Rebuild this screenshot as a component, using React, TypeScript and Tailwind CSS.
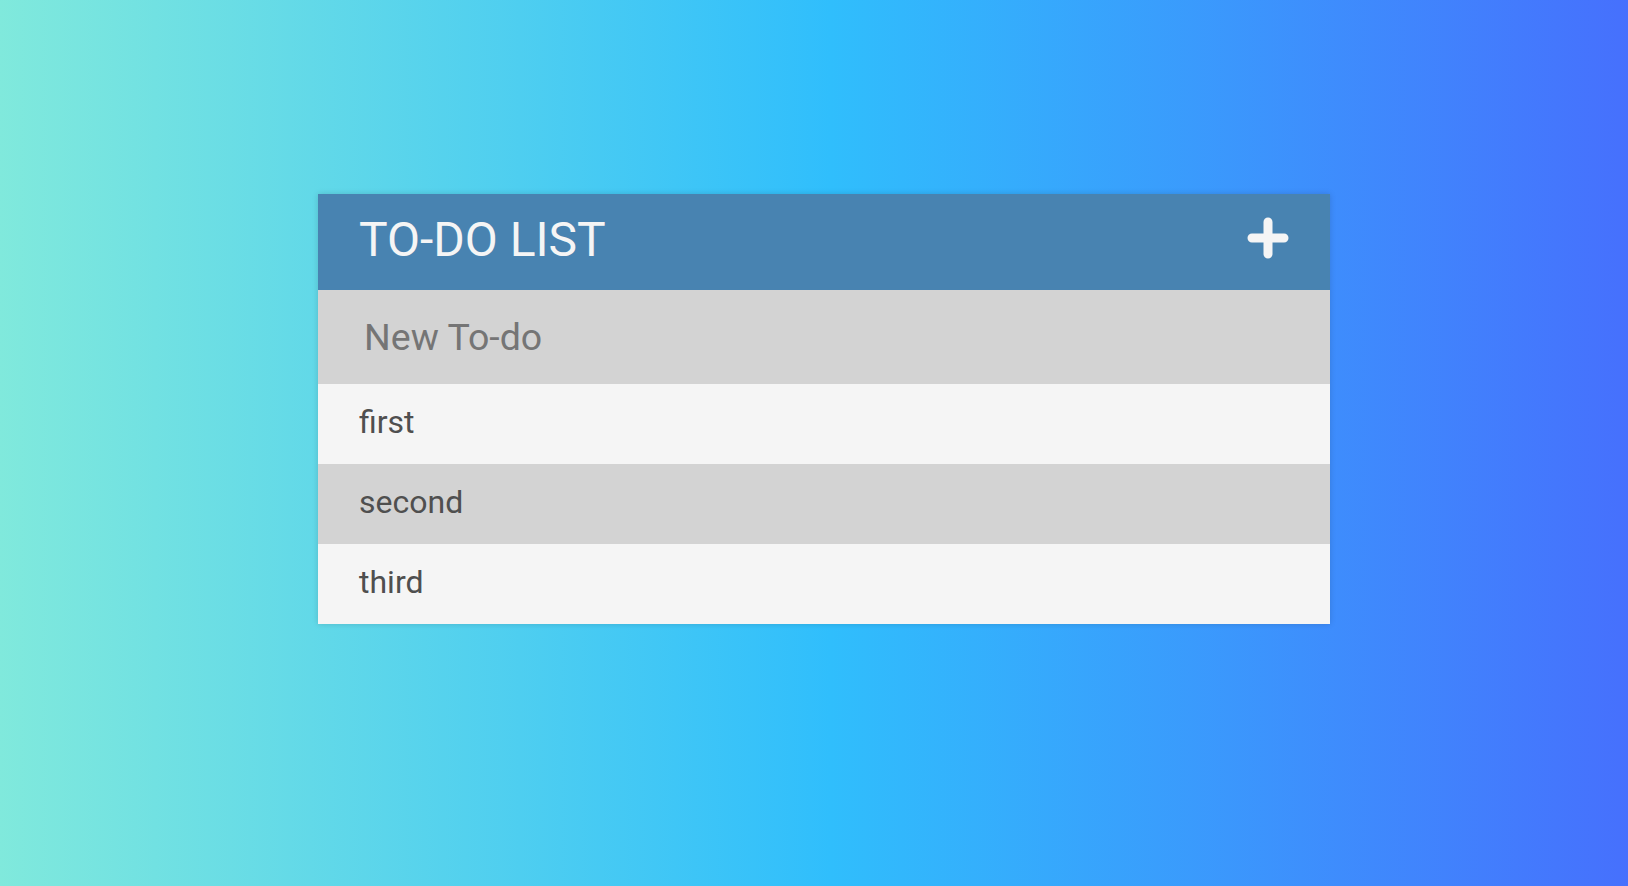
const todos = ['first', 'second', 'third'];

function PlusIcon() {
  return (
    <svg width="42" height="42" viewBox="0 0 42 42" aria-hidden="true">
      <path d="M21 5v32M5 21h32" stroke="#f5f5f5" strokeWidth="9" strokeLinecap="round" />
    </svg>
  );
}

export default function App() {
  return (
    <div className="h-screen w-full overflow-hidden bg-[linear-gradient(to_right,#80e9dc_0%,#30befc_51%,#4670fd_100%)] pt-[194px] pl-[318px] font-['Roboto',sans-serif]">
      <div className="w-[1012px] shadow-[0_0_6px_rgba(0,0,0,0.15)]">
        <div className="flex h-[96px] items-center justify-between bg-[#4883b1] px-[41px]">
          <h1 className="-mt-[4px] text-[48px] font-normal leading-none text-[#f5f5f5]">TO-DO LIST</h1>
          <div className="-mt-[8px]">
            <PlusIcon />
          </div>
        </div>
        <input
          type="text"
          placeholder="New To-do"
          className="block h-[94px] w-full bg-[#d3d3d3] pl-[46px] text-[37.5px] text-[#555] outline-none placeholder:text-[#757575]"
        />
        <ul>
          {todos.map((todo, i) => (
            <li
              key={todo}
              className={[
                'flex h-[80px] items-center pb-[4px] pl-[41px] text-[32px] text-[#4f4f4f]',
                i % 2 === 0 ? 'bg-[#f5f5f5]' : 'bg-[#d3d3d3]',
              ].join(' ')}
            >
              {todo}
            </li>
          ))}
        </ul>
      </div>
    </div>
  );
}
